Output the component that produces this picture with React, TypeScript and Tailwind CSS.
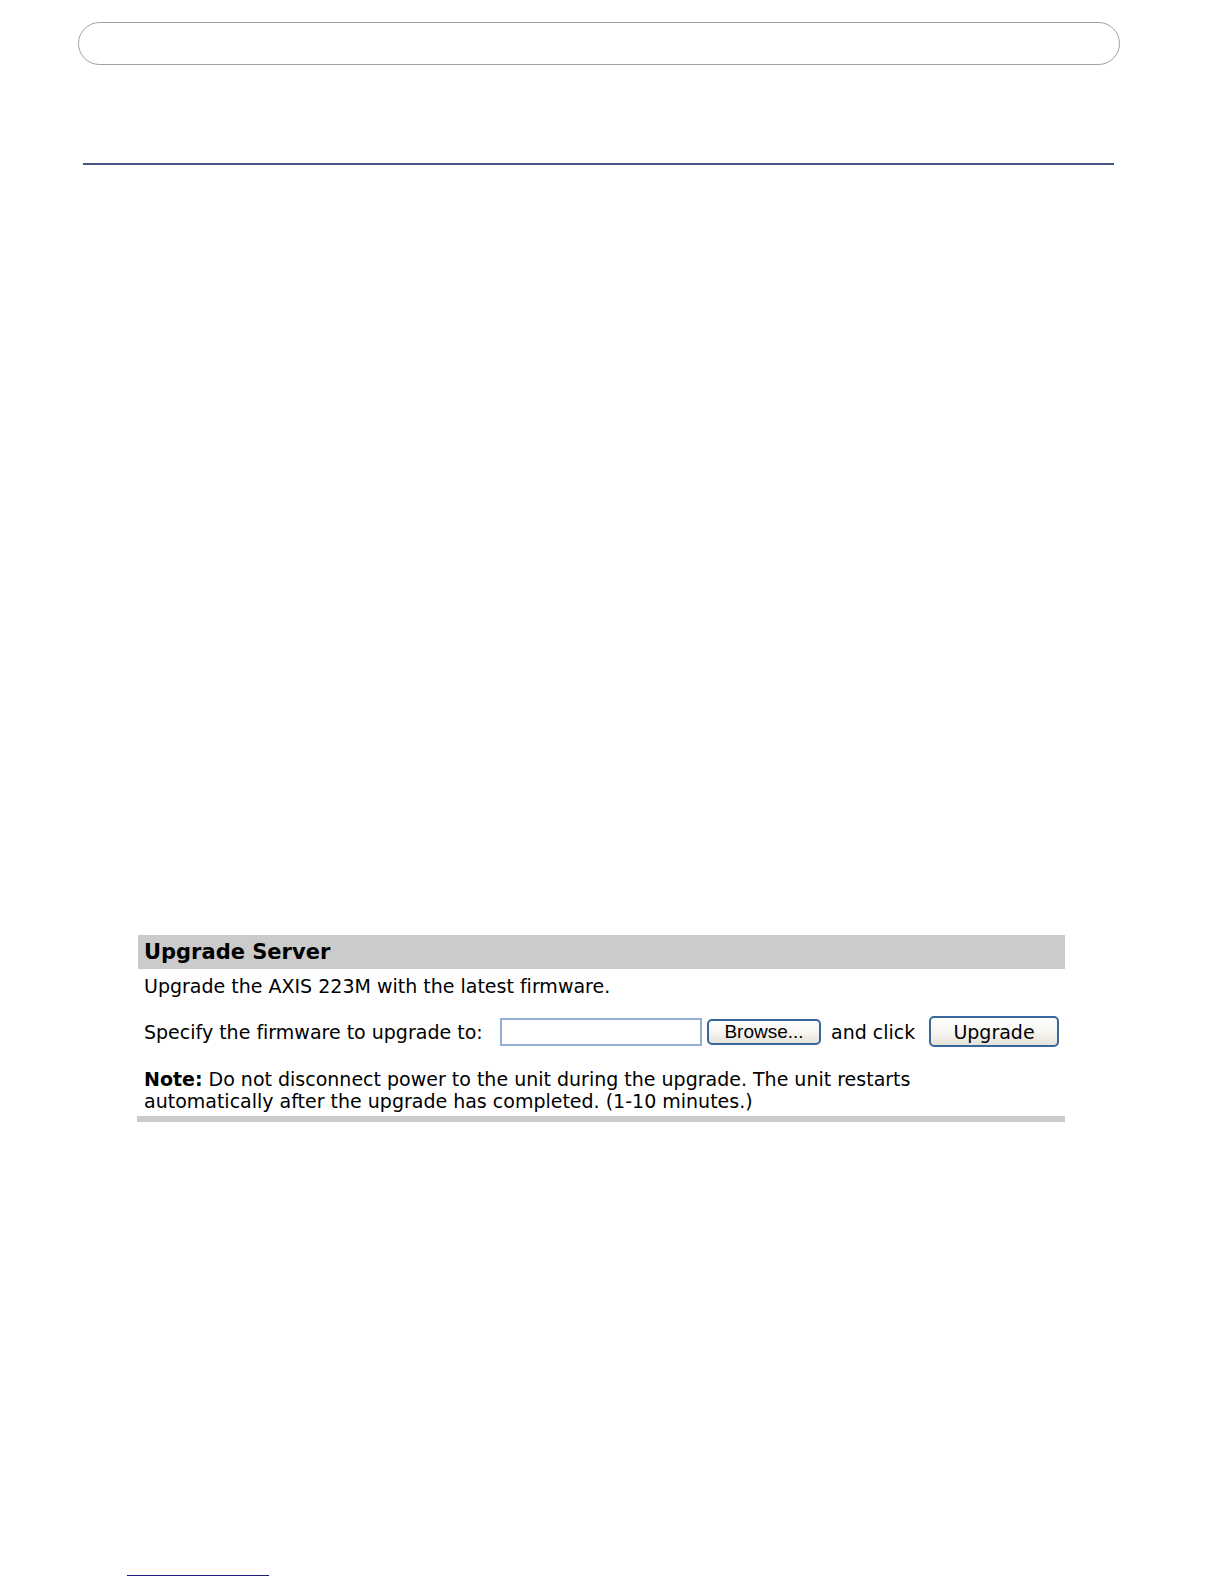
import React from "react";

const xpButton =
  "shrink-0 rounded-[5px] border-2 border-[#39679c] bg-linear-to-b from-white via-[#f7f6f2] to-[#e4e2d8] text-black";

function UpgradeServer() {
  return (
    <section className="ml-[137px] mr-[159px] mt-[770px] border-b-6 border-[#cbcbcb] font-['DejaVu_Sans',sans-serif] text-[19px] leading-[22px] text-black [font-variant-ligatures:none]">
      <h1 className="ml-px bg-[#cbcbcb] px-1.5 py-1 text-[21px] leading-[26px] font-bold">
        Upgrade Server
      </h1>
      <div className="pl-[7px] pr-1.5 pt-1.5 pb-1">
        <p>Upgrade the AXIS 223M with the latest firmware.</p>
        <form className="mt-[19px] flex items-center" onSubmit={(e) => e.preventDefault()}>
          <label htmlFor="firmware" className="w-[356px] shrink-0 whitespace-nowrap">
            Specify the firmware to upgrade to:
          </label>
          <input
            id="firmware"
            type="text"
            className="h-7 w-[202px] min-w-0 border-2 border-[#93aed0] bg-white px-1"
          />
          <button
            type="button"
            className={`${xpButton} ml-[5px] h-[26px] w-[114px] font-['Liberation_Sans',sans-serif] text-[19px] leading-[20px]`}
          >
            Browse...
          </button>
          <span className="ml-2.5 whitespace-nowrap">and click</span>
          <button type="submit" className={`${xpButton} ml-auto h-[31px] w-[130px]`}>
            Upgrade
          </button>
        </form>
        <p className="mt-[21px] max-w-[820px]">
          <strong>Note:</strong> Do not disconnect power to the unit during the upgrade. The unit
          restarts automatically after the upgrade has completed. (1-10 minutes.)
        </p>
      </div>
    </section>
  );
}

export default function App() {
  return (
    <div className="flex min-h-screen flex-col bg-white">
      <header className="ml-[78px] mr-[104px] mt-[22px] h-[43px] rounded-full border border-[#a0a0a0]" />
      <hr className="ml-[83px] mr-[110px] mt-[98px] border-t-2 border-[#4b5587]" />
      <UpgradeServer />
      <footer className="mt-auto pb-2 pl-[127px]">
        <hr className="w-[142px] border-t border-[#1a1a80]" />
      </footer>
    </div>
  );
}
